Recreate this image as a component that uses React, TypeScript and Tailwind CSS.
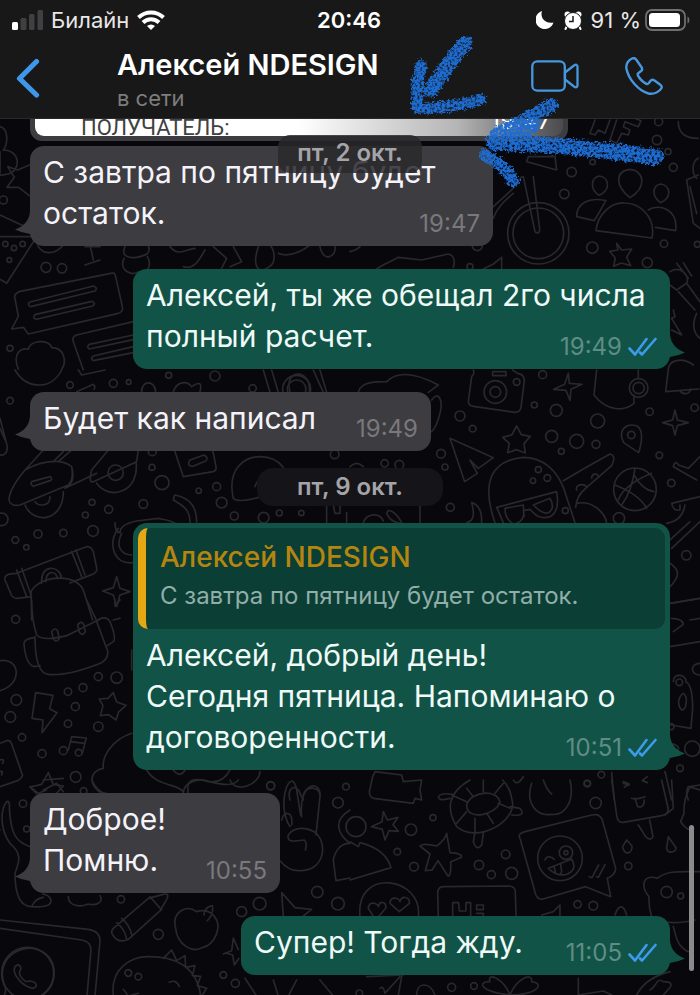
import type { ReactNode } from 'react'
import clsx from 'clsx'

interface Message {
  id: number
  lines: string[]
  time: string
  mine?: boolean
  width: string
  quote?: { author: string; text: string }
}

const earlier: Message[] = [
  { id: 1, lines: ['С завтра по пятницу будет', 'остаток.'], time: '19:47', width: 'w-[463px]' },
  { id: 2, lines: ['Алексей, ты же обещал 2го числа', 'полный расчет.'], time: '19:49', mine: true, width: 'w-[537px]' },
  { id: 3, lines: ['Будет как написал'], time: '19:49', width: 'w-[401px]' },
]

const later: Message[] = [
  {
    id: 4,
    lines: ['Алексей, добрый день!', 'Сегодня пятница. Напоминаю о', 'договоренности.'],
    time: '10:51',
    mine: true,
    width: 'w-[537px]',
    quote: { author: 'Алексей NDESIGN', text: 'С завтра по пятницу будет остаток.' },
  },
  { id: 5, lines: ['Доброе!', 'Помню.'], time: '10:55', width: 'w-[250px]' },
  { id: 6, lines: ['Супер! Тогда жду.'], time: '11:05', mine: true, width: 'w-[429px]' },
]

function Ticks() {
  return (
    <svg className="h-5 w-[29px]" viewBox="0 0 29 20" fill="none" stroke="#3d9be9" strokeWidth="2.6" strokeLinecap="round" strokeLinejoin="round">
      <path d="M1.500 11.500l5.500 6L18.500 2" />
      <path d="M12 15.500l2 2L27.500 2" />
    </svg>
  )
}

function Tail({ mine }: { mine?: boolean }) {
  return mine ? (
    <svg className="absolute -right-4 bottom-1 h-8 w-7" viewBox="0 0 28 32" fill="#115347">
      <path d="M0 0h12c0 9 5 16 15 19.500Q20 23 12 24L0 28z" />
    </svg>
  ) : (
    <svg className="absolute -left-4 bottom-1 h-8 w-7" viewBox="0 0 28 32" fill="#3d3c40">
      <path d="M28 0H16c0 9-5 16-15 19.500Q8 23 16 24l12 4z" />
    </svg>
  )
}

function Bubble({ msg }: { msg: Message }) {
  return (
    <article
      className={clsx(
        'relative max-w-full rounded-[14px]',
        msg.width,
        msg.mine ? 'self-end bg-[#115347] text-[#effaf7]' : 'self-start bg-[#3d3c40] text-[#f5f3fa]',
      )}
    >
      <Tail mine={msg.mine} />
      {msg.quote && (
        <div className="relative px-[5px] pt-[5px]">
          <blockquote className="h-[101px] overflow-hidden rounded-[10px] border-l-8 border-[#e5a812] bg-[#0b3e35] pt-2 pl-[14px]">
            <p className="text-[28px] leading-[42px] font-medium text-[#b5860f]">{msg.quote.author}</p>
            <p className="text-[24px] leading-9 whitespace-nowrap text-[#91aea9]">{msg.quote.text}</p>
          </blockquote>
        </div>
      )}
      <div className="relative grid px-[13px] pt-[6px] pb-3">
        <p className="col-start-1 row-start-1 text-[30px] leading-[41px] whitespace-nowrap">
          {msg.lines.map((line) => (
            <span key={line} className="block">{line}</span>
          ))}
        </p>
        <div className="col-start-1 row-start-1 flex items-center gap-[6px] self-end justify-self-end">
          <time className={clsx('text-[24px] leading-5', msg.mine ? 'text-[#5f8d84]' : 'text-[#79787d]')}>{msg.time}</time>
          {msg.mine && <Ticks />}
        </div>
      </div>
    </article>
  )
}

function StatusBar() {
  return (
    <div className="grid h-10 grid-cols-[1fr_auto_1fr] items-center pr-[14px] pl-3 text-[22px] text-[#e8e8e8]">
      <div className="flex items-center gap-2">
        <svg className="h-5 w-[31px]" viewBox="0 0 31 20" fill="#404042">
          <rect x="0" y="12" width="6" height="8" rx="1.500" fill="#fff" />
          <rect x="8.500" y="8" width="6" height="12" rx="1.500" />
          <rect x="17" y="4" width="5.500" height="16" rx="1.500" />
          <rect x="25.500" y="0" width="5.500" height="20" rx="1.500" />
        </svg>
        <span>Билайн</span>
        <svg className="h-5 w-7" viewBox="0 0 28 20" fill="none" stroke="#fff" strokeWidth="4">
          <path d="M1.500 7.500a18 18 0 0 1 25 0" />
          <path d="M6 12.500a11.500 11.500 0 0 1 16 0" />
          <path d="M14 20l-4-4a6 6 0 0 1 8 0z" fill="#fff" stroke="none" />
        </svg>
      </div>
      <time className="font-semibold text-white">20:46</time>
      <div className="flex items-center justify-end">
        <svg className="mr-[10px] h-[18px] w-[18px]" viewBox="0 0 18 18" fill="#fff">
          <path d="M6 0C4 6 8 13 17.500 11.500A9.200 9.200 0 1 1 6 0z" />
        </svg>
        <svg className="mr-[9px] h-[19px] w-[18px]" viewBox="0 0 18 19">
          <path d="M3 15l-1.500 3M15 15l1.500 3" stroke="#fff" strokeWidth="2" strokeLinecap="round" />
          <circle cx="3.500" cy="3.500" r="3" fill="#fff" />
          <circle cx="14.500" cy="3.500" r="3" fill="#fff" />
          <circle cx="9" cy="10" r="8.500" fill="#fff" stroke="#181818" />
          <path d="M9 5v5.500H5" fill="none" stroke="#181818" strokeWidth="1.500" />
        </svg>
        <span className="mr-1 whitespace-nowrap">91 %</span>
        <svg className="-mr-1 h-[22px] w-[45px]" viewBox="0 0 45 22">
          <rect x="1" y="1" width="39" height="20" rx="6" fill="none" stroke="#6f6f70" strokeWidth="1.800" />
          <rect x="4" y="4" width="31" height="14" rx="3.500" fill="#fff" />
          <path d="M42.500 7.500c2.500 1 2.500 6 0 7z" fill="#6f6f70" />
        </svg>
      </div>
    </div>
  )
}

function Header() {
  return (
    <header className="relative z-10 h-[119px] border-b border-[#29292b] bg-[#181818]">
      <StatusBar />
      <div className="flex items-start">
        <button type="button" aria-label="Назад" className="mt-[18px] ml-4 w-[101px]">
          <svg className="h-10 w-6" viewBox="0 0 24 40" fill="none" stroke="#3f97ea" strokeWidth="5.200" strokeLinecap="round" strokeLinejoin="round">
            <path d="M20.500 3.500L3.500 20.500l17 16.500" />
          </svg>
        </button>
        <div className="flex-1 pt-1">
          <h1 className="text-[29px] leading-[42px] font-semibold whitespace-nowrap text-white">Алексей NDESIGN</h1>
          <p className="text-[22px] leading-[24px] text-[#7d7d7e]">в сети</p>
        </div>
        <button type="button" aria-label="Видеозвонок" className="mt-5 mr-[46px]">
          <svg className="h-8 w-12" viewBox="0 0 48 32" fill="none" stroke="#4797df" strokeWidth="2.300" strokeLinejoin="round">
            <rect x="1.300" y="1.300" width="32.500" height="29.400" rx="5" />
            <path d="M34 12.500L43 5.500q3-2 3.500 1V25.500q-.5 3-3.500 1L34 19.500z" />
          </svg>
        </button>
        <button type="button" aria-label="Позвонить" className="mt-[17px] mr-[37px]">
          <svg className="h-[38px] w-[38px]" viewBox="0 0 38 38" fill="none" stroke="#4797df" strokeWidth="2.400" strokeLinejoin="round">
            <path d="M7 1.500C3.500 3 .5 7 1.500 12c2 10 12 22 22 24.500 5 1 9-1 12-4 2-2 1.500-3.500-.5-5l-5.500-4c-1.800-1.200-3-1-4 .3l-1.800 2.500c-.7.8-1.700.9-2.700.3-3.500-2-6.500-5-8-8-.6-1.200-.4-2 .5-2.700l2.300-1.600c1.500-1 1.700-2.200.9-3.800L11.500 3C10.300 1 9 .7 7 1.500z" />
          </svg>
        </button>
      </div>
    </header>
  )
}

// One patch of the wallpaper, drawn at triple size
function Patch({ x, y, d, dots }: { x: number; y: number; d: string; dots: number[][] }) {
  return (
    <g transform={`translate(${x} ${y}) scale(0.3333)`}>
      <path d={d} />
      {dots.map(([cx, cy, r], i) => (
        <circle key={i} cx={cx} cy={cy} r={r} />
      ))}
    </g>
  )
}

function Wallpaper() {
  return (
    <svg
      aria-hidden="true"
      className="absolute inset-0 h-full w-full"
      viewBox="0 0 700 995"
      preserveAspectRatio="xMidYMin slice"
      fill="none"
      stroke="#29282c"
      strokeWidth="5"
      strokeLinecap="round"
      strokeLinejoin="round"
    >
      <Patch
        x={0}
        y={110}
        d="M0 50c25 5 25 50 10 70M10 120c50 0 55 60 15 72l-25 4M0 125v65M88 165l-35 15-30-10 20 32-22 30 35 0 32 25M0 315l60 28 40 15M0 380h110l-90 140-20-12M110 395c10 45 55 40 80 10M255 410h45M270 405l10 45M255 465l45-15M375 410c-15 30 15 35 35 32 25-5 45-10 35-35M372 445c-15 35 20 55 45 40 25 10 40-20 25-45M510 410c25 30 40 10 75 5M550 470c35 10 50-25 65-50M640 410l40 35-20 40M700 410l25 45-35 15M775 410c-20 60 0 90 40 55 15-20 5-50-5-60M835 430c30 15 80-10 100-30M960 410c10 50 50 30 45 0M45 565q-5-12 12-20l275-55q12-5 15 10l20 90q4 15-12 20L85 672l-15-20-35 5 20-38zM90 576l190-48q15 5 5 15L92 590q-12-5-2-14zM105 614l170-40q15 5 3 14l-168 40q-15-2-5-14zM400 635l-170 40q-15 5-10 20l30 85M400 675l-132 28q-10 8 0 14l132-28M400 710l-120 28q-10 8 0 14l120-24M55 778c-20-50 10-65 30-60 5-30 65-30 70-5 40 0 45 45 30 65"
        dots={[[10, 270, 12], [16, 402, 8], [42, 414, 8], [68, 402, 8], [28, 450, 7], [138, 472, 15], [186, 475, 14], [30, 715, 9]]}
      />
      <Patch
        x={350}
        y={80}
        d="M735 120l-15 40 15 5 10-15 20 10 15-40M800 120l-20 60 20 10 15-30 20 5 5-15-20-10 5-15 40 15 8-18-30-12M985 125c0 40 30 50 60 50M430 380l55-50 30-40M520 290l35 165c8 8 15 2 14-8L550 290M535 230h80l5 40-90-25zM430 415c10-30 30-50 60-75M738 452c5-50 45-85 85-83 50 0 95 45 83 105zM680 410c0-40 35-60 88-48l-35 60zM895 390c30-20 90-5 82 62l-60-10M748 288c-25 5-30 40 0 58 35-15 30-55 0-58zM840 268c-45 5-45 50 0 85 50-30 45-80 0-85zM932 312c-25 5-28 38 0 56 35-15 30-52 0-56zM800 490l15 20 30-3-15 25 12 25-28-8-23 10 5-25-17-20 25-4zM0 515q20-5 30-15M80 567c20-15 40-20 65-35l70 8 80-18c20 5 20 25 15 40M400 567l30-15 25-20v35M960 575c30-20 60 10 50 35l-30 20-20-15M980 550l35 45M1000 548l25 40M1010 610l40 55M985 635l50 55M1045 235c-20 10-20 45-5 60M1010 300l35-15M1010 300l20 130 20 15M1020 320l20 80M970 690l5 20-10 5 30 50-30-15M1040 700c-15 30-10 60 10 75M955 870c0-30 40-40 75-15"
        dots={[[926, 125, 12], [921, 180, 14], [954, 215, 9], [970, 262, 12], [665, 276, 14], [728, 246, 8], [643, 342, 14], [727, 503, 17], [892, 548, 15], [942, 491, 11], [382, 497, 15], [1042, 493, 9], [565, 460, 92], [565, 460, 76], [360, 560, 9]]}
      />
      <Patch
        x={0}
        y={370}
        d="M45 0c35 60 110 60 140 0M235 0l10 15 70-15M230 65l50-22q8 8 2 15M790 0l20 67M815 0l20 67M940 0l30 67M960 0l20 67M520 65c10-30 40-35 55-15 30-20 30-5 25 15M425 65c0-35 40-35 42 0M870 65c-20-70 65-70 58 0M0 145l22 85c0 20-10 28-22 25M0 175l15 35M130 240L75 300M75 300C140 265 190 270 215 290c5 30 0 45-10 55L60 405c-20 5-32-5-33-15 0-20 15-50 48-90zM190 245l-30 30M215 240l-40 35M215 290c10 35 0 55-20 65l95-45M95 335l55-15q10 8 0 12l-50 17q-10-5-5-14zM75 405c25 60 115 50 115-40M105 395c10 15 45 15 45-15M280 335c-10 5-12-10-5-35l50-60M280 335l130-60 5-35M290 340c40 55 130 25 118-65M525 245l25 75 90-15q10-3 8-15l-10-50M570 270l42-15q15 8 5 18l-38 16q-20 0-9-19zM700 385c-20-90 35-125 80-125 35 0 55 12 70 32M700 385q15 15 85-5M765 350q5-20 20-20M525 375c50 10 65 40 65 83M570 458c0-40-20-50-50-68l3-13M345 458q0 30 15 30 0-25 50-35l65-8c20 5 35 5 50 15M355 475c-35 50-10 110 42 103M365 490c-20 40 0 65 30 65M980 458v-50M1000 405l5 25h15v-30M1040 458v-30M50 610l205-78q15-8 25 12l10 50q2 15-15 20l-65 25M95 680l-45 5q-15 0-20-20l-15-35q-5-20 35-20M50 600l30 80M65 595l28 80M215 545l30 75M228 540l27 75M125 640c-5-60 55-55 60-15M138 635c0-35 30-35 35-8M95 750l-2-85c25-50 145-60 160 5l25 80M350 620l10 35 30 10-30 10-10 35-10-35-32-12 32-10zM340 750l20-5"
        dots={[[210, 45, 10], [340, 40, 12], [386, 36, 7], [506, 16, 9], [645, 18, 15], [758, 55, 11], [30, 92, 10], [890, 58, 42], [890, 58, 28], [456, 292, 9], [486, 338, 21], [596, 362, 8], [650, 350, 12], [665, 398, 16], [430, 402, 13], [326, 418, 12], [276, 397, 9], [256, 435, 9], [114, 492, 12], [190, 489, 11], [279, 483, 16], [46, 510, 10], [79, 532, 8], [703, 438, 12], [791, 443, 16], [838, 429, 9], [904, 429, 8], [347, 308, 23], [5, 448, 19], [1004, 253, 13], [457, 245, 12]]}
      />
      <Patch
        x={350}
        y={370}
        d="M25 65c10-30 50-30 85-30 30-30 80-30 155 10l-30 22M370 0q5 10-5 20L355 95q0 12 20 15l120 17q15 0 18-15l10-80q0-20-20-22l-15-10M428 5h40v12h-40zM245 90c20-30 35 0 25 40q-10 40-25 55M655 10l3 30 38 3-33 15-3 33-12-30-37-3 33-15zM740 0l-8 75c40 50 90 50 120 25v-25M865 0v25M955 0l-8 65 100-8M990 62c10 15 30 10 32-5M300 205l130 58-45 32-25-25 22 40-38 25zM500 168l14 26 27 5-19 22 4 28-26-10-27 9 5-28-20-18 27-7zM975 120l7 30 33 8-33 9-7 28-7-28-30-9 30-8zM866 248l-45-30c-20-40 10-60 40-50 20 12 15 50 5 80zM435 458C390 330 430 270 520 262c60 0 100 40 120 90l35 106M440 412l180-47q10 60-20 75c-30 10-45-5-60-22l-18 3c0 25-10 35-20 37M440 412l20 46M465 415l55-10 2 35M465 415q0 30 20 43M550 405l50-20q15 25 0 40t-50-20zM640 332l60-35 80-45q20 5 5 35l-80 70q-25 20-28 55M725 325c0-15 18-18 20-5M680 360c-5-18 20-20 30-10M680 400c50-10 85 30 90 58M795 345c50 20 80 40 95 70M855 295q-10 70-40 110M905 310c-50 20-90 50-100 80M912 365q-35-5-60-50M970 290c5-20 15-10 15-5l30 10 35-35M970 290l70 40M965 400l85-20M965 400q5 25 25 20v-15M950 460c30-5 50-20 55-55M965 535l85-80M960 510l60-55M960 580c30 20 30 40 0 70M960 700l90-15M350 458q30-5 15-60c30 10 30 40 30 60M0 290q20-20 40 0M110 430c5-20 30 0 45 28M110 430q10 25 40 30M210 405v53M40 458c10-30 50-30 60-5"
        dots={[[436, 66, 34], [436, 66, 16], [500, 36, 10], [578, 14, 12], [553, 105, 9], [619, 121, 18], [743, 153, 21], [330, 138, 15], [368, 176, 10], [605, 199, 18], [680, 214, 21], [738, 223, 12], [634, 244, 9], [273, 251, 13], [285, 291, 9], [899, 125, 11], [1034, 113, 11], [928, 256, 10], [844, 195, 11], [866, 54, 28], [866, 54, 17], [855, 358, 64], [565, 299, 9], [592, 324, 10], [549, 332, 8], [301, 412, 12], [646, 422, 9], [807, 445, 17], [964, 339, 11], [1009, 556, 14], [104, 280, 11], [148, 284, 13]]}
      />
      <Patch
        x={0}
        y={600}
        d="M95 0q0 60 15 105 20 20 90 2l90-45L260 0M105 110c0 60 10 110 40 113 50 5 110-15 160-35 15-10 20-20 18-35L290 65M105 112q-35 5-33 20 5 60 30 68l18-3M290 65c15-20 35-10 40 0q20 50 10 60l-18 12M155 95q10-15 18-2l5 22q-8 15-18 2zM233 75q10-15 18-2l5 22q-8 15-18 2zM345 0v18l15-18M0 182c60-10 70 70 0 90M107 278l52 8-10 40 22 12-45 60 3-38-33-5zM340 278l10 28 28 10-22 20-8 24-22-16-25 3 8-30-11-20 26-2zM205 450l10-40 44 4-12 45M212 425l42 5M0 430l20-8q10-3 15 10l33 95q-5 10-15 15L0 560M0 480q15-5 8 10M0 515q10-5 5 10M145 518l15 35 30 5-20 22M145 518l-20 35-35 8 20 20M395 400c-60 20-90 70-85 105-40 5-50 50 0 78M395 150v60M440 510c30 50 90 40 110 65M565 580c-5-30 0-45 40-40 60 20 80-20 85-30M690 540c20 45 90 10 90-25M520 510q20 25 35 0M870 600c-10-40 20-50 30-20l10 20M910 585c5-25 45-30 50 0"
        dots={[[47, 58, 12], [295, 230, 12], [350, 233, 17], [249, 263, 12], [204, 275, 11], [49, 300, 16], [31, 351, 16], [226, 320, 12], [204, 371, 11], [295, 380, 14], [66, 412, 11], [126, 461, 12], [190, 452, 12], [236, 458, 10], [227, 531, 16], [251, 573, 10], [812, 558, 12], [1038, 560, 10]]}
      />
      <Patch
        x={350}
        y={600}
        d="M960 10l90-15M965 55c20 0 35 8 35 18L970 95M1020 60l30-5M960 140l90-15M970 245c0-30 40-20 38 0q20 10 20 80l-5 60-60-10M1000 280c15 10 10 50-5 50-15-15-10-40 5-50zM1050 190c-30 0-30 35 0 35M960 430q30 5 25 20M945 515l20 85M785 518l8 82M820 545l18 7-15 10M892 530l-15 12 15 6M1050 570l-35-10q-10 15 0 40"
        dots={[[988, 247, 10], [1027, 446, 23], [990, 505, 10], [712, 551, 10], [754, 524, 10], [963, 380, 9]]}
      />
      <Patch
        x={0}
        y={780}
        d="M20 65C0 90 0 150 30 190c35 30 30 50 15 90 0 70 20 100 50 100q60 5 58-20-5-15-25-18M20 65q10-5 8 20c5 80 20 100 62 115M205 350c0 25 30 35 60 22 30 8 45-10 35-25M95 380q10-25 35-28M0 420l265 28q35 5 35 35l-15 165M0 445l245 35q28 5 28 30l-12 138M12 648q5-10 5-22c-40-90 50-140 100-115 60 20 60 110 5 137M45 560c-10 20 20 60 55 65 15-5 10-20-10-22l-12 2c-15-10-20-20-20-28l5-12q-5-18-18-5zM340 445l105-90 45-12q20-5 10 15l-20 35-95 85q-30 15-48-15-5-10 3-18zM350 428q25 20 30 50M365 415q25 20 30 50M450 350l35 40M590 395c-35-25-75 5-63 50 5 50 50 75 80 58 40-10 55-60 42-85q-20-35-59-23zM612 405c0-15 10-25 25-28q5 25-15 45M340 648c-10-80 50-120 110-118 60 0 140 20 152 118M490 535l25-25 15 32 25-15 2 35 28-5-8 30 25 2-10 28 28 8-15 23M370 628l15 20 30-8M508 607q20-10 30 12M870 140c-45-70 5-190 20-110l12 75M905 110c-10-110 60-110 55-60l-12 115M865 165c20-30 60-20 80-8 40 30 30 120-50 115-20 0-40-12-55-30M865 165q-5 20 20 18l28-3q10 10 3 30M845 120c10-35 35-20 30 15M1050 90c-50 30-40 70 0 100M1000 240c5-25 20-50 50-50M1000 240l8 62 42-8M850 408l-5-70 40 45 50 5-25 20M670 522l25-10 5-38 15 35M680 520l18 5 5 30 14-20M820 600l15 48M735 595l35 53M0 150v0M130 0l60-5M130 30l40-20 20 25M90 20l25 20 25-10M275 0c15 30 30 40 45 40M550 40c0-30 40-50 80-35 70 20 80 0 85-5M890 600l-25 48M960 600l40 48"
        dots={[[69, 71, 11], [80, 147, 9], [363, 358, 11], [475, 463, 15], [385, 579, 10], [415, 590, 10], [779, 371, 19], [725, 395, 15], [952, 336, 17], [1014, 68, 16], [1014, 371, 19], [812, 17, 12], [670, 585, 10], [706, 610, 12], [83, 580, 78]]}
      />
      <Patch
        x={350}
        y={780}
        d="M75-25l80 10 5 20 55-5-5 30 5 30-20-5-5 15-120-15q-12-5-12-20l10-45zM100 95l-4 30-32 15 33 8 8 32 12-28 28 2-16-20 15-22-32 8zM0 185l25 15 5-12c40 10 80 30 93 75L0 300M290 160q-5 20-30 38-40-10-50 0l30 24-14 50 20-2 18-28 30 46q10 0 8-42l32-14q5-12-34-14zM30 410c-15-150 190-120 175 0M55 385c0-25 30-15 30-5 5-20 25-15 22 5l-30 35zM120 370c0-25 30-15 30-5 5-20 30-15 28 5l-30 25zM265 410l-2-75q2-15 20-15l195-2q18 2 18 18l2 70M308 410v-42h18l2 25h20v-25h14v42M380 375h20v14h-20zM380 400h20v10M360 0C290 40 290 90 320 140c60 50 170-10 168-70-5-30-10-50-30-70M350 75c10-40 90-50 100-10-10 40-100 60-100 10zM305 45l45 20M320 130l30-35M375 155v-40M430 130l-18-27M480 85l-35-15M460 10l-25 30M400 0v35M350 25l20 25M300 55q-40 10-33-7 10-10 40-5M375 155l-5 30q10 30 25 10l5-35M480 80l30 5q20 25-25 20M490 0q10 20 30-10M545 10c-20 60 15 100 60 93 40 5 70-40 55-103M580 0q10 30 25 42M510 175q-8-15 15-20l200-50q25-5 32 15l40 145q0 20-25 30l10 55-75-30-130 38q-15 0-20-15zM585 240c5-15 20-10 28-2M595 265l70-28q18 30-12 45-30 10-58-17zM612 260l5 20q15 10 18-5l-3-22M718 290l8 3 20-38M740 290l5 2 20-38M785 0l15 105q2 25 20 22l115-20q20-5 20-20L935 0M965 0l5 85-25 20M865 135l22 35q15 15 22 0l-10-50M820 10l18 5M845 55q15 5 40-5M855 55l8 25q20 5 20-20M830 180l-12 20c5 30 30 20 28-2zM955 170l-5 35c5 20 30 10 28-2zM1050 15l-30 5q-20 40-18 80l-10 25q25 35 40 20M905 410c-10-30-8-50-8-60-25-30-20-70 25-55 30-25 70-20 130-20M905 410q40 30 130 10M970 440c10 40 15 60 45 75M575 405l35-10 20-20v32M795 405c10-30 25-35 35 0M90 625q10-10 15 15l45-50M155 590l-10 55M50 590l110-5M200 645c0-40 40-40 55 0M480 645c-90-10-100-40-60-40-10-30 40-10 60 40 20-50 70-70 65-40 40 5 20 40-65 40M685 595v50l75-12 25 12M860 645c20-40 60-60 100-70M900 630c20-10 20-40 40-25 40 0 20 20 0 40"
        dots={[[249, 113, 9], [183, 149, 17], [142, 215, 10], [192, 260, 13], [467, 223, 13], [387, 255, 14], [424, 284, 12], [485, 280, 18], [737, 69, 17], [712, 10, 9], [835, 258, 11], [683, 373, 11], [730, 377, 13], [630, 235, 67], [648, 218, 20], [648, 218, 6], [950, 336, 17], [992, 348, 9], [18, 140, 30], [305, 622, 12], [372, 618, 10], [28, 640, 10]]}
      />
    </svg>
  )
}

// Crayon arrows pointing at the date
function Scribbles() {
  return (
    <svg aria-hidden="true" className="pointer-events-none absolute top-0 left-0 z-20 h-[200px] w-[700px]" viewBox="0 0 700 200" fill="none" stroke="#1c6cd2" strokeLinecap="round" strokeLinejoin="round">
      <defs>
        <filter id="crayon" x="-5%" y="-5%" width="110%" height="110%">
          <feTurbulence type="fractalNoise" baseFrequency="0.4" numOctaves="2" seed="4" result="noise" />
          <feDisplacementMap in="SourceGraphic" in2="noise" scale="9" xChannelSelector="R" yChannelSelector="G" result="rough" />
          <feColorMatrix in="noise" type="matrix" values="0 0 0 0 0  0 0 0 0 0  0 0 0 0 0  0 0 3 0 -0.6" result="grain" />
          <feComposite in="rough" in2="grain" operator="in" result="chalk" />
          <feGaussianBlur in="chalk" stdDeviation="0.6" />
        </filter>
      </defs>
      <g filter="url(#crayon)">
        <path d="M465 43C453 56 442 74 431 90" strokeWidth="15" />
        <path d="M421 66C416 80 418 94 417 107" strokeWidth="12" />
        <path d="M418 108c20 1 42-2 63-9" strokeWidth="11" />
        <path d="M551 105L497 137" strokeWidth="14" />
        <path d="M528 124l-26 13" strokeWidth="24" />
        <path d="M494 142c30 3 58 2 88 6 26 3 52 6 74 9" strokeWidth="16" />
        <path d="M485 155c10 6 22 12 28 26" strokeWidth="12" />
      </g>
    </svg>
  )
}

function DatePill({ children }: { children: ReactNode }) {
  return (
    <div className="relative my-[17px] h-[38px] w-[186px] self-center rounded-[16px] bg-[#151418] text-center text-[24px] leading-[37px] font-semibold text-[#a5a4a8]">
      {children}
    </div>
  )
}

export default function App() {
  return (
    <div className="relative min-h-screen overflow-hidden bg-[#08070b] font-['Inter','Liberation_Sans',sans-serif]">
      <Wallpaper />
      <Header />
      <main className="relative flex flex-col pr-[30px] pb-5 pl-[30px]">
        {/* Photo scrolled almost out of view */}
        <figure className="flex h-[22px] w-[538px] max-w-full items-end overflow-hidden rounded-b-[12px] bg-[#3d3c40] px-[5px] pb-[5px]">
          <figcaption className="flex h-[17px] flex-1 items-end justify-between overflow-hidden rounded-b-[9px] bg-linear-to-r from-white from-50% via-[#b5b5b5] via-80% to-[#4b4b4d] pr-3 pl-[46px]">
            <span className="font-['Roboto',sans-serif] text-[22px] leading-4 text-[#414141]">ПОЛУЧАТЕЛЬ:</span>
            <time className="pb-[5px] text-[24px] leading-5 text-white">19:47</time>
          </figcaption>
        </figure>
        <div className="mt-[5px] flex flex-col gap-[23px]">
          {earlier.map((msg) => (
            <Bubble key={msg.id} msg={msg} />
          ))}
        </div>
        <DatePill>пт, 9 окт.</DatePill>
        <div className="flex flex-col gap-[23px]">
          {later.map((msg) => (
            <Bubble key={msg.id} msg={msg} />
          ))}
        </div>
        <div className="absolute top-4 left-1/2 h-[38px] w-36 -translate-x-1/2 rounded-[12px] bg-[#29282b]/85 text-center text-[24px] leading-[36px] font-semibold text-[#a5a4a8]">
          пт, 2 окт.
        </div>
        <div className="absolute right-[6px] bottom-6 h-[146px] w-[5px] rounded-full bg-[#8b8b8d]" />
      </main>
      <Scribbles />
    </div>
  )
}
